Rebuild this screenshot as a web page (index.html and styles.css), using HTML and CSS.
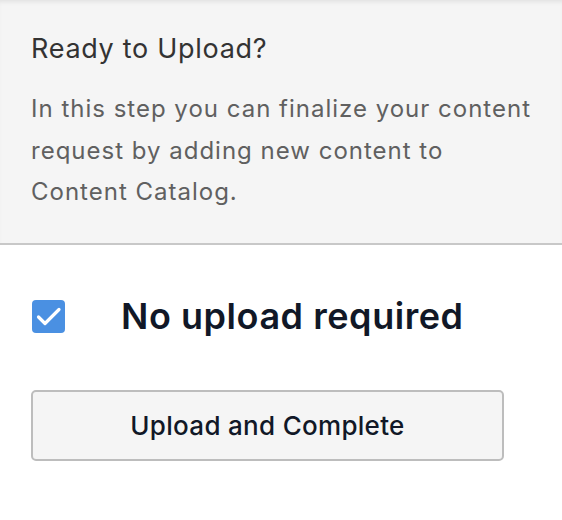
FILE: index.html
```html
<!DOCTYPE html>
<html lang="en">
<head>
<meta charset="utf-8">
<title>Ready to Upload</title>
<link rel="stylesheet" href="styles.css">
</head>
<body>
<section class="intro">
  <h2 class="intro-title">Ready to Upload?</h2>
  <p class="intro-text">In this step you can finalize your content request by adding new content to Content Catalog.</p>
</section>
<div class="actions">
  <label class="check-row">
    <span class="checkbox">
      <svg viewBox="0 0 33 33" width="33" height="33" aria-hidden="true"><path d="M6.5 17l6.5 6.5L27 9.5" fill="none" stroke="#fff" stroke-width="3.2" stroke-linecap="round" stroke-linejoin="round"/></svg>
    </span>
    <span class="check-label">No upload required</span>
  </label>
  <button class="upload-btn" type="button">Upload and Complete</button>
</div>
</body>
</html>
```
FILE: styles.css
```css
html, body {
  margin: 0;
  padding: 0;
  background: #fff;
  font-family: Inter, "Noto Sans", "Liberation Sans", sans-serif;
}

.intro {
  background: #f5f5f5;
  box-shadow: inset 0 4px 4px -2px rgba(0,0,0,0.08);
  border-bottom: 2px solid #c8c8c8;
  padding: 33px 20px 30px 31px;
}

.intro-title {
  margin: 0;
  font-size: 27px;
  font-weight: 400;
  letter-spacing: 0.7px;
  color: #333;
  line-height: 32px;
}

.intro-text {
  margin: 23px 0 0;
  font-size: 24px;
  letter-spacing: 1px;
  line-height: 41.5px;
  color: #606060;
  max-width: 508px;
}

.actions {
  padding: 55px 0 0 31px;
}

.check-row {
  display: flex;
  align-items: center;
  gap: 56px;
}

.checkbox {
  width: 33px;
  height: 33px;
  border-radius: 4px;
  background: #4a90e2;
  display: flex;
  margin-left: 1px;
}

.check-label {
  font-size: 36px;
  line-height: 33px;
  font-weight: 600;
  letter-spacing: 0.55px;
  color: #111827;
}

.upload-btn {
  display: block;
  box-sizing: border-box;
  margin-top: 57px;
  width: 473px;
  height: 71px;
  border: 2px solid #bdbdbd;
  border-radius: 5px;
  background: #f5f5f5;
  font-family: inherit;
  font-size: 26px;
  font-weight: 500;
  letter-spacing: 0.3px;
  color: #111827;
}
```
